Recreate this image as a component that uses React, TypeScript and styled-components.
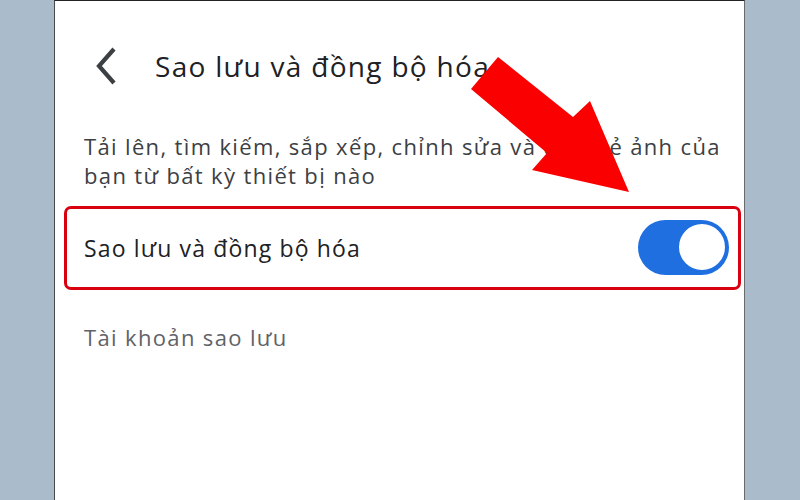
import React from "react";
import styled, { createGlobalStyle } from "styled-components";

const Global = createGlobalStyle`
  html, body { margin: 0; padding: 0; }
  body { background: #aabccb; font-family: "Open Sans", "Noto Sans", sans-serif; }
  #root { width: 800px; height: 500px; overflow: hidden; }
`;

const Page = styled.div`
  width: 800px;
  height: 500px;
  background: #aabccb;
  display: flex;
  justify-content: flex-start;
`;

const Phone = styled.div`
  position: relative;
  margin-left: 54px;
  width: 691px;
  height: 500px;
  box-sizing: border-box;
  background: #ffffff;
  border-left: 1.5px solid #4a4a4a;
  border-right: 1.5px solid #6a6a6a;
  border-top: 1.5px solid #222;
  display: flex;
  flex-direction: column;
`;

const Header = styled.div`
  display: flex;
  align-items: center;
  height: 48px;
  margin-top: 41px;
  padding-left: 38px;
  gap: 36px;
`;

const BackIcon = styled.svg`
  width: 26px;
  height: 40px;
  flex: none;
`;

const Title = styled.h1`
  margin: 0;
  font-size: 28px;
  font-weight: 400;
  color: #202124;
  letter-spacing: 1.3px;
`;

const Description = styled.p`
  margin: 42px 0 0 29px;
  width: 650px;
  font-size: 22px;
  line-height: 29px;
  letter-spacing: 1.35px;
  color: #3c4043;
`;

const Highlight = styled.div`
  margin: 16px 0 0 9px;
  width: 677px;
  height: 84px;
  box-sizing: border-box;
  border: 3px solid #d90010;
  border-radius: 7px;
  display: flex;
  align-items: center;
  justify-content: space-between;
  padding: 0 9px 0 17px;
`;

const RowLabel = styled.span`
  font-size: 23px;
  font-weight: 500;
  letter-spacing: 1.15px;
  color: #202124;
`;

const Track = styled.div<{ $on: boolean }>`
  width: 91px;
  height: 55px;
  border-radius: 28px;
  background: ${(p) => (p.$on ? "#1f6fe0" : "#bdc1c6")};
  display: flex;
  align-items: center;
  justify-content: ${(p) => (p.$on ? "flex-end" : "flex-start")};
  padding: 0 2px;
  box-sizing: border-box;
  margin-bottom: 2px;
`;

const Thumb = styled.div`
  width: 50px;
  height: 50px;
  border-radius: 50%;
  background: #fff;
  box-sizing: border-box;
  border: 2px solid #1f6fe0;
`;

const Account = styled.div`
  margin: 32px 0 0 29px;
  font-size: 22px;
  letter-spacing: 1.35px;
  color: #5f6368;
`;

const Arrow = styled.svg`
  position: absolute;
  left: -55px;
  top: -1px;
  width: 800px;
  height: 500px;
  pointer-events: none;
`;

export default function App() {
  return (
    <>
      <Global />
      <Page>
        <Phone>
          <Header>
            <BackIcon viewBox="0 0 26 40">
              <path d="M21 3 L6 20 L21 37" fill="none" stroke="#3c4043" strokeWidth="4.2" strokeLinecap="butt" strokeLinejoin="miter" />
            </BackIcon>
            <Title>Sao lưu và đồng bộ hóa</Title>
          </Header>
          <Description>
            Tải lên, tìm kiếm, sắp xếp, chỉnh sửa và chia sẻ ảnh của bạn từ bất kỳ thiết bị nào
          </Description>
          <Highlight>
            <RowLabel>Sao lưu và đồng bộ hóa</RowLabel>
            <Track $on={true}>
              <Thumb />
            </Track>
          </Highlight>
          <Account>Tài khoản sao lưu</Account>
          <Arrow viewBox="0 0 800 500">
            <polygon points="498,57 573,117 590,101 629,192 532,170 547,153 471,89" fill="#fa0000" />
          </Arrow>
        </Phone>
      </Page>
    </>
  );
}
